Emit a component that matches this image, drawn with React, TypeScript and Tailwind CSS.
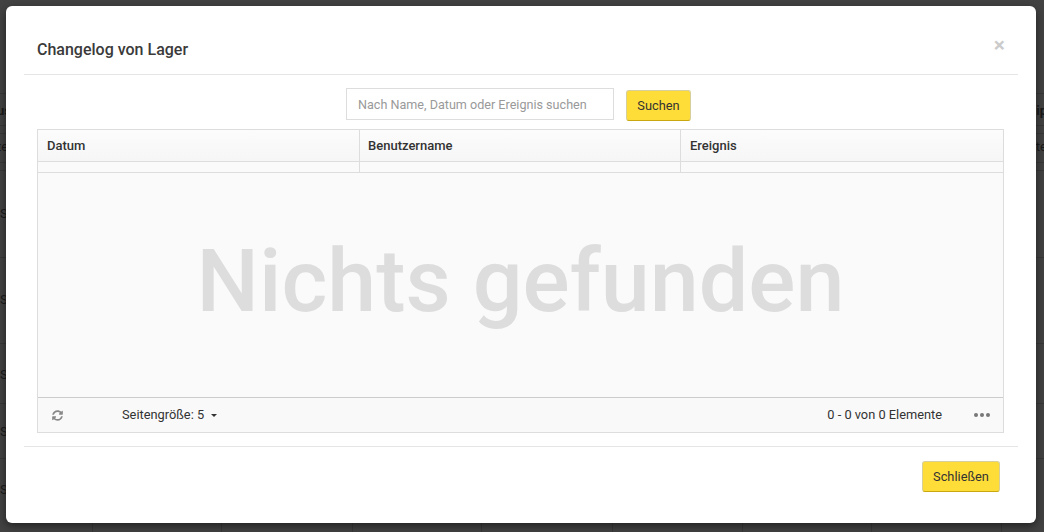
import { FaSyncAlt } from "react-icons/fa";

const rowLine = "border-b border-[#383838]";

export default function App() {
  return (
    <div className="relative h-[532px] w-[1044px] overflow-hidden bg-[#424242] font-['Roboto',sans-serif] text-[#333]">
      {/* Page behind the dialog */}
      <div className="flex h-full flex-col pt-[93px] text-[13px] text-[#1a1a1a]">
        <div className={`flex h-[33px] items-center justify-between border-t border-[#383838] pt-[3px] font-bold ${rowLine}`}>
          <span className="-ml-[3px]">us</span>
          <span className="-mr-[3px]">ip</span>
        </div>
        <div className="h-[8px] shrink-0 border-b border-[#383838]" />
        <div className={`flex h-[29px] items-center justify-between ${rowLine}`}>
          <span className="-ml-[3px] -mt-[2px]">te</span>
          <span className="-mr-[3px] -mt-[2px]">te</span>
        </div>
        <div className={`h-[8px] shrink-0 ${rowLine}`} />
        <div className={`flex h-[87px] items-center ${rowLine}`}><span>S</span></div>
        <div className={`flex h-[86px] items-center ${rowLine}`}><span className="mt-[-1px]">S</span></div>
        <div className={`flex h-[60px] items-center ${rowLine}`}><span className="mt-[2px]">S</span></div>
        <div className={`flex h-[55px] items-center ${rowLine}`}><span className="mt-[1px]">S</span></div>
        <div className="grid flex-1 grid-cols-[93px_129px_131px_129px_131px_130px_129px_130px_1fr]">
          <div className="flex items-center border-r border-[#383838]"><span className="mt-[-12px]">S</span></div>
          <div className="border-r border-[#383838]" />
          <div className="border-r border-[#383838]" />
          <div className="border-r border-[#383838]" />
          <div className="border-r border-[#383838]" />
          <div className="border-r border-[#383838]" />
          <div className="border-r border-[#383838]" />
          <div className="border-r border-[#383838]" />
        </div>
      </div>

      {/* Dialog */}
      <div className="absolute left-[6px] top-[6px] flex h-[517px] w-[1030px] flex-col rounded-md bg-white shadow-[0_3px_9px_rgba(0,0,0,0.5)]">
        <div className="relative mx-[18px] flex h-[69px] shrink-0 items-center border-b border-[#e5e5e5] pl-[13px] pt-[20px]">
          <h4 className="text-[16px] font-medium leading-none text-[#3a3a3a]">Changelog von Lager</h4>
          <button className="absolute right-[13px] top-[27px] text-[21px] font-bold leading-[24px] text-black opacity-20">×</button>
        </div>

        <div className="flex flex-1 flex-col px-[31px] pt-[13px]">
          <div className="flex h-[41px] items-start justify-center pr-[5px]">
            <div className="flex h-[32px] w-[268px] items-center border border-[#ddd] px-[11px] pt-[2px] text-[12.6px] text-[#999]">
              Nach Name, Datum oder Ereignis suchen
            </div>
            <button className="ml-[12px] mt-[2px] h-[31px] w-[65px] rounded-[3px] border border-[#d6cf9c] border-b-[#c9a80f] bg-[#ffdd39] text-[12.8px] text-[#333]">
              Suchen
            </button>
          </div>

          <div className="flex h-[304px] w-[967px] flex-col border border-[#ddd] bg-[#fafafa]">
            <div className="grid h-[32px] shrink-0 grid-cols-[321px_321px_1fr] border-b border-[#ddd] bg-gradient-to-b from-[#fcfcfc] to-[#f6f6f6] text-[13px] font-medium leading-[31px] text-[#333]">
              <div className="pl-[9px]">Datum</div>
              <div className="border-l border-[#ddd] pl-[8px]">Benutzername</div>
              <div className="border-l border-[#ddd] pl-[9px]">Ereignis</div>
            </div>
            <div className="grid h-[11px] shrink-0 grid-cols-[321px_321px_1fr] border-b border-[#ddd]">
              <div />
              <div className="border-l border-[#ddd]" />
              <div className="border-l border-[#ddd]" />
            </div>
            <div className="flex flex-1 items-center justify-center pb-[8px] text-[88px] font-medium leading-none text-[#dddddd]">
              Nichts gefunden
            </div>
            <div className="flex h-[35px] shrink-0 items-center border-t border-[#ccc] bg-[#f9f9f9] text-[12.8px] text-[#333]">
              <FaSyncAlt size={11} className="ml-[14px] text-[#888]" />
              <span className="ml-[59px]">Seitengröße: 5</span>
              <span className="ml-[7px] mt-[1px] h-0 w-0 border-x-[3px] border-t-[3px] border-x-transparent border-t-[#333]" />
              <span className="ml-auto">0 - 0 von 0 Elemente</span>
              <span className="ml-[32px] mr-[13px] flex gap-[2px]">
                <i className="h-[4px] w-[4px] rounded-full bg-[#777]" />
                <i className="h-[4px] w-[4px] rounded-full bg-[#777]" />
                <i className="h-[4px] w-[4px] rounded-full bg-[#777]" />
              </span>
            </div>
          </div>
        </div>

        <div className="mx-[18px] flex h-[77px] shrink-0 items-start justify-end border-t border-[#e5e5e5] pr-[18px] pt-[14px]">
          <button className="h-[31px] w-[78px] rounded-[3px] border border-[#d6cf9c] border-b-[#c9a80f] bg-[#ffdd39] text-[12.8px] text-[#333]">
            Schließen
          </button>
        </div>
      </div>
    </div>
  );
}
